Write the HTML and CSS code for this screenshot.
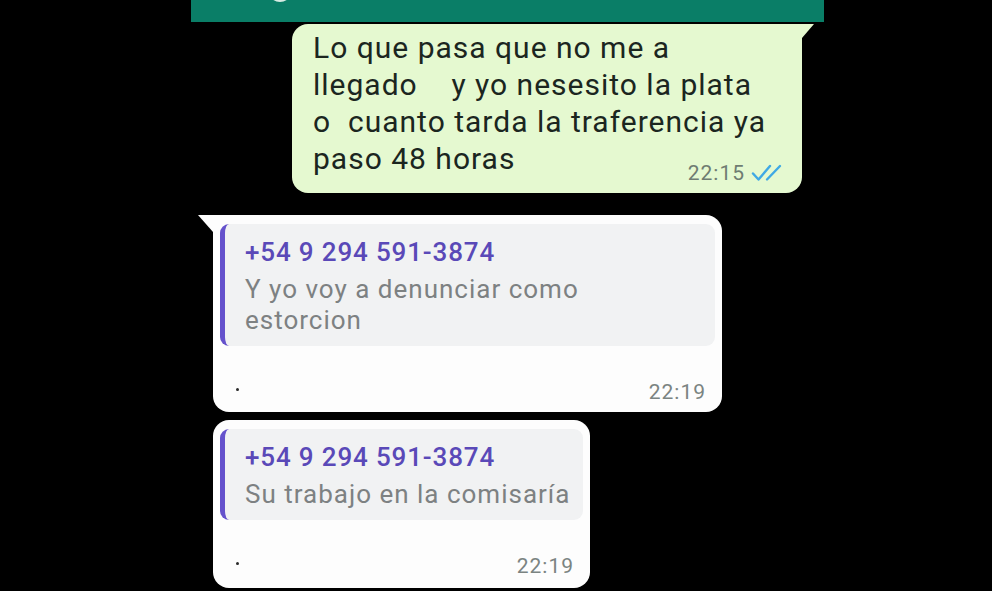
FILE: index.html
```html
<!DOCTYPE html>
<html lang="es">
<head>
    <meta charset="UTF-8">
    <meta name="viewport" content="width=device-width, initial-scale=1.0">
    <title>Chat</title>
    <link rel="stylesheet" href="styles.css">
</head>
<body>
    <div class="chat">
        <div class="header">
            <div class="avatar"></div>
        </div>

        <div class="messages">
            <div class="bubble out">
                <div class="text">Lo que pasa que no me a<br>llegado &nbsp;&nbsp; y yo nesesito la plata<br>o &nbsp;cuanto tarda la traferencia ya<br>paso 48 horas<span class="meta">22:15
                    <svg class="ticks" width="31" height="18" viewBox="0 0 31 18">
                        <path d="M2 9.5 L7.5 15.5 L19 2" fill="none" stroke="#3fa9e4" stroke-width="2.4" stroke-linecap="round" stroke-linejoin="round"/>
                        <path d="M16 15.5 L29 2" fill="none" stroke="#3fa9e4" stroke-width="2.4" stroke-linecap="round"/>
                    </svg></span></div>
            </div>

            <div class="bubble in wide first">
                <div class="quote">
                    <div class="quote-name">+54 9 294 591-3874</div>
                    <div class="quote-text">Y yo voy a denunciar como<br>estorcion</div>
                </div>
                <div class="footer">
                    <span class="dot"></span>
                    <span class="time">22:19</span>
                </div>
            </div>

            <div class="bubble in narrow">
                <div class="quote">
                    <div class="quote-name">+54 9 294 591-3874</div>
                    <div class="quote-text">Su trabajo en la comisaría</div>
                </div>
                <div class="footer">
                    <span class="dot"></span>
                    <span class="time">22:19</span>
                </div>
            </div>
        </div>
    </div>
</body>
</html>
```

FILE: styles.css
```css
html, body {
    margin: 0;
    padding: 0;
    background: #000;
}
body {
    width: 992px;
    height: 591px;
    overflow: hidden;
    font-family: Roboto, "Liberation Sans", sans-serif;
}
.chat {
    width: 633px;
    margin-left: 191px;
    display: flex;
    flex-direction: column;
}
.header {
    height: 22px;
    background: #0a7e67;
    display: flex;
    align-items: flex-end;
    padding-left: 77px;
    overflow: hidden;
}
.avatar {
    width: 24px;
    height: 24px;
    border-radius: 50%;
    background: #d7ebe3;
    margin-bottom: 20px;
    flex-shrink: 0;
}
.messages {
    display: flex;
    flex-direction: column;
    padding: 0 22px;
}
.bubble {
    position: relative;
    border-radius: 16px;
}
.bubble.out {
    align-self: flex-end;
    width: 510px;
    box-sizing: border-box;
    margin-top: 2px;
    padding: 5px 20px 16px 21px;
    background: #e5f9d0;
    border-top-right-radius: 0;
    color: #1b261f;
}
.bubble.out::before {
    content: "";
    position: absolute;
    top: 0;
    right: -12px;
    border-top: 14px solid #e5f9d0;
    border-right: 12px solid transparent;
}
.bubble.out .text {
    font-size: 30px;
    line-height: 37px;
    letter-spacing: 1px;
}
.meta {
    float: right;
    margin: 22px 0 -9px 12px;
    font-size: 21px;
    line-height: 22px;
    letter-spacing: 1px;
    color: #6f7d72;
    display: flex;
    align-items: center;
    gap: 6px;
}
.ticks {
    display: block;
}
.bubble.in {
    align-self: flex-start;
    box-sizing: border-box;
    background: #fdfdfd;
    padding: 9px 7px 9px 7px;
}
.bubble.in.first {
    margin-top: 22px;
    border-top-left-radius: 0;
}
.bubble.in.first::before {
    content: "";
    position: absolute;
    top: 0;
    left: -15px;
    border-top: 17px solid #fdfdfd;
    border-left: 15px solid transparent;
}
.bubble.in.wide {
    width: 509px;
}
.bubble.in.narrow {
    width: 377px;
    margin-top: 8px;
    padding-bottom: 11px;
}
.quote {
    background: #f1f2f3;
    border-radius: 9px;
    border-left: 5px solid #6552cc;
    padding: 12px 16px 10px 20px;
}
.quote-name {
    font-size: 26px;
    line-height: 32px;
    font-weight: 500;
    color: #5a49b8;
    letter-spacing: 0.85px;
    white-space: nowrap;
}
.quote-text {
    margin-top: 6px;
    font-size: 26px;
    line-height: 31px;
    color: #7d8182;
    letter-spacing: 1px;
    white-space: nowrap;
}
.footer {
    display: flex;
    justify-content: space-between;
    align-items: center;
    margin-top: 35px;
    padding: 0 9px 0 16px;
    height: 22px;
}
.dot {
    width: 3px;
    height: 3px;
    border-radius: 50%;
    background: #2a2a2a;
    margin-top: -6px;
}
.time {
    font-size: 21px;
    line-height: 22px;
    color: #7b8482;
    letter-spacing: 1px;
}
```
